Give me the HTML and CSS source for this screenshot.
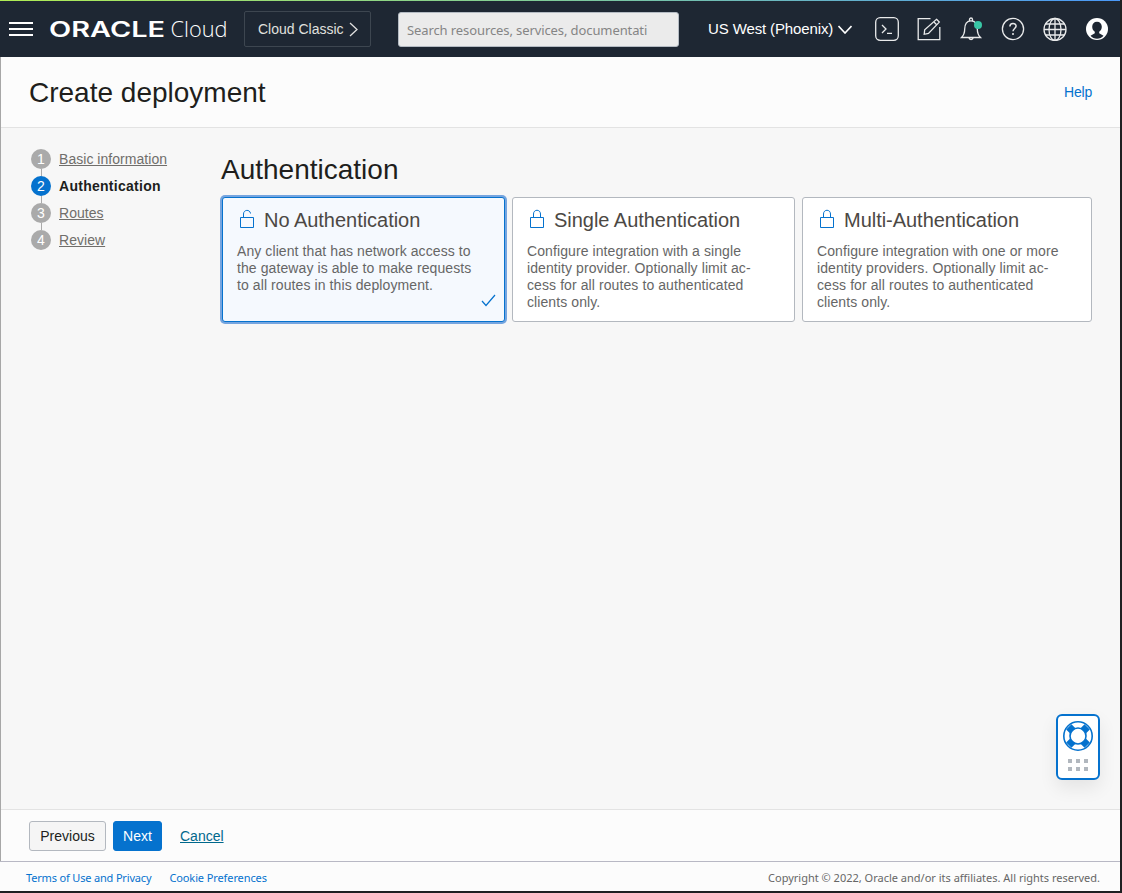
FILE: index.html
```
<!DOCTYPE html>
<html lang="en">
<head>
<meta charset="utf-8">
<title>Create deployment</title>
<link rel="stylesheet" href="styles.css">
</head>
<body>
<div class="window">
  <header class="topbar">
    <button class="menu" aria-label="Menu"><span></span><span></span><span></span></button>
    <svg class="logo" width="178" height="26" viewBox="0 0 178 26">
      <text class="brand" x="-1" y="19" textLength="116" lengthAdjust="spacingAndGlyphs">ORACLE</text>
      <text class="product" x="120.500" y="19" textLength="57" lengthAdjust="spacingAndGlyphs">Cloud</text>
    </svg>
    <a class="classic"><span>Cloud Classic</span>
      <svg width="9" height="15" viewBox="0 0 9 15"><path d="M1 1l7 6.500-7 6.500"/></svg>
    </a>
    <div class="search">Search resources, services, documentati</div>
    <div class="region"><span>US West (Phoenix)</span>
      <svg width="14" height="9" viewBox="0 0 14 9"><path d="M.5 1l6.500 7 6.500-7"/></svg>
    </div>
    <nav class="tools">
      <svg viewBox="0 0 24 24"><rect x=".7" y=".7" width="22.600" height="22.600" rx="4.500"/><path d="M7 8l4 4-4 4M12 16.300h5"/></svg>
      <svg viewBox="0 0 24 24"><path d="M13.500 1.600H1.200v21h21.600V10"/><path d="M19.500 2.300l2.800 2.800L11.500 16.500l-4.300.8.500-4.500z"/><path d="M17 5l2.700 2.700"/></svg>
      <svg viewBox="0 0 24 24"><path d="M2.500 20.500c2-2 3.200-5 3.200-8.500 0-5 2-8.200 6.300-8.200s6.300 3.200 6.300 8.200c0 3.500 1.200 6.500 3.200 8.500zM10.500 3.800V2.500a1.500 1.500 0 0 1 3 0v1.300M9.800 20.700a2.300 2.300 0 0 0 4.500 0"/><circle class="alert" cx="19" cy="8" r="4"/></svg>
      <svg viewBox="0 0 24 24"><circle cx="12" cy="12" r="10.600"/><path class="question" d="M8.900 9.500c0-4 6.200-4 6.200-.4 0 2.400-3.100 2.400-3.100 5.200M12 16v2"/></svg>
      <svg viewBox="0 0 24 24"><circle cx="12" cy="12.500" r="11"/><ellipse cx="12" cy="12.500" rx="6" ry="11"/><path d="M12 1.500v22M1 12.500h22M2.500 7h19M2.500 18h19"/></svg>
      <svg class="avatar" viewBox="0 0 24 24"><circle class="face" cx="12" cy="12" r="11"/><path class="person" d="M12 4.800c-3 0-4.800 2-4.800 5 0 2.200 1 4 2.600 5v1.500L5.500 18.800c3 4 10 4 13 0l-4.300-2.500v-1.500c1.600-1 2.600-2.800 2.600-5 0-3-1.800-5-4.800-5z"/></svg>
    </nav>
  </header>
  <div class="page">
    <div class="heading"><h1>Create deployment</h1><a class="help">Help</a></div>
    <main class="content">
      <ol class="steps">
        <li><b>1</b><a>Basic information</a></li>
        <li class="current"><b>2</b><a>Authentication</a></li>
        <li><b>3</b><a>Routes</a></li>
        <li><b>4</b><a>Review</a></li>
      </ol>
      <section class="panel">
        <h2>Authentication</h2>
        <div class="cards">
          <article class="card selected">
            <h3><svg width="16" height="20" viewBox="0 0 16 20"><path d="M1.500 8.500h13v10h-13z"/><path class="shackle" d="M4.500 8.500V5c0-4.500 6.500-5 7-.5"/></svg><span>No Authentication</span></h3>
            <p>Any client that has network access to<br>the gateway is able to make requests<br>to all routes in this deployment.</p>
            <svg class="check" width="15" height="13" viewBox="0 0 15 13"><path d="M1 7l4 4.500L14 1"/></svg>
          </article>
          <article class="card">
            <h3><svg width="16" height="20" viewBox="0 0 16 20"><path d="M1.500 8.500h13v10h-13z"/><path class="shackle" d="M4.500 8.500V5c0-5 7-5 7 0v3.500"/></svg><span>Single Authentication</span></h3>
            <p>Configure integration with a single<br>identity provider. Optionally limit ac-<br>cess for all routes to authenticated<br>clients only.</p>
          </article>
          <article class="card">
            <h3><svg width="16" height="20" viewBox="0 0 16 20"><path d="M1.500 8.500h13v10h-13z"/><path class="shackle" d="M4.500 8.500V5c0-5 7-5 7 0v3.500"/></svg><span>Multi-Authentication</span></h3>
            <p>Configure integration with one or more<br>identity providers. Optionally limit ac-<br>cess for all routes to authenticated<br>clients only.</p>
          </article>
        </div>
      </section>
    </main>
    <div class="actions">
      <button class="btn">Previous</button>
      <button class="btn primary">Next</button>
      <a class="cancel">Cancel</a>
    </div>
  </div>
  <footer class="footer">
    <a class="terms">Terms of Use and Privacy</a><a class="cookies">Cookie Preferences</a>
    <span class="copyright">Copyright © 2022, Oracle and/or its affiliates. All rights reserved.</span>
  </footer>
  <aside class="support">
    <svg width="30" height="30" viewBox="0 0 30 30"><path class="bands" d="M5.800 5.800l4 4M24.200 5.800l-4 4M5.800 24.200l4-4M24.200 24.200l-4-4"/><circle cx="15" cy="15" r="14.200"/><circle cx="15" cy="15" r="8"/></svg>
    <div class="grip"><i></i><i></i><i></i><i></i><i></i><i></i></div>
  </aside>
</div>
</body>
</html>
```
FILE: styles.css
```
* { box-sizing: border-box; }
body { margin: 0; background: #1f2022; font-family: "Liberation Sans", Arial, sans-serif; font-size: 14px; }
h1, h2, h3, p, ol { margin: 0; padding: 0; font-weight: 400; }
button { font: inherit; padding: 0; }
svg { display: block; flex: none; fill: none; }
.window { position: relative; width: 1120px; height: 891px; display: flex; flex-direction: column; }
.topbar { height: 57px; flex: none; display: flex; align-items: flex-start; background: linear-gradient(90deg, #b0ec54, #7fcb9b 50%, #4a98f8) 0 0 / 100% 1px no-repeat #1e2733; color: #fff; white-space: nowrap; }
.menu { width: 24px; height: 14px; margin: 22px 0 0 9px; border: 0; background: none; display: flex; flex-direction: column; justify-content: space-between; }
.menu span { height: 2px; background: #fff; }
.logo { margin: 18px 0 0 17px; overflow: visible; }
.logo text { fill: #fff; }
.brand { font: 600 21px Inter, sans-serif; }
.product { font: 300 22px "Open Sans", sans-serif; }
.classic { margin: 11px 0 0 16px; width: 127px; height: 36px; border: 1px solid #3d4650; border-radius: 2px; display: flex; align-items: center; padding-left: 13px; gap: 5px; color: #e0e0df; }
.classic svg, .region svg { stroke: currentColor; stroke-width: 1.3; }
.search { margin: 12px 0 0 27px; width: 281px; height: 35px; background: #ebebeb; border: 1px solid #b4bbc3; border-radius: 3px; padding: 0 8px; font: 13px/35px "Noto Sans", sans-serif; letter-spacing: -.1px; color: #858585; }
.region { margin: 18px 0 0 29px; height: 22px; width: 167px; display: flex; align-items: center; gap: 5px; font-size: 15px; letter-spacing: -.12px; }
.region span { line-height: 22px; height: 22px; }
.region svg { stroke-width: 1.6; margin-top: 1px; }
.tools { display: flex; gap: 18px; margin-top: 17px; }
.tools svg { width: 24px; height: 24px; stroke: #e9eaeb; stroke-width: 1.3; }
.tools .alert { fill: #39c6a5; stroke: none; }
.tools .question { stroke-width: 1.5; }
.tools .avatar { stroke: none; }
.face { fill: #fff; }
.person { fill: #1e2733; }
.page { flex: 1; border-left: 1px solid #a7a7a7; display: flex; flex-direction: column; background: #f7f7f7; }
.heading { height: 71px; flex: none; display: flex; align-items: center; justify-content: space-between; padding: 0 28px; background: #fcfcfc; border-bottom: 1px solid #e3e3e3; }
h1 { font-size: 28px; color: #201e1c; padding-top: 2px; }
.help { color: #0572ce; letter-spacing: -.2px; }
.content { flex: 1; display: flex; padding: 17px 28px 0 30px; }
.steps { width: 190px; list-style: none; }
.steps li { height: 27px; display: flex; align-items: center; color: #706e6b; }
.steps b { position: relative; width: 20px; height: 20px; border-radius: 50%; background: #aaa; color: #fff; font-weight: 400; line-height: 20px; text-align: center; margin-right: 8px; }
.steps li:not(:last-child) b::after { content: ""; position: absolute; left: 10px; top: 20px; width: 1px; height: 7px; background: #aaa; }
.steps a { text-decoration: underline; letter-spacing: .04px; }
.steps .current { color: #201e1c; font-weight: 700; }
.steps .current b { background: #0572ce; }
.steps .current a { text-decoration: none; letter-spacing: .27px; }
.panel { flex: 1; padding-top: 8px; }
h2 { font-size: 28px; line-height: 34px; height: 44px; color: #201e1c; }
.cards { display: grid; grid-template-columns: 285px 283px 290px; column-gap: 6px; width: 871px; }
.cards .card:last-child { margin-left: 1px; width: 290px; }
.card { position: relative; height: 125px; background: #fff; border: 1px solid #b3b8bf; border-radius: 3px; padding: 10px 14px; color: #666; white-space: nowrap; }
.card.selected { background: #f5f9fe; border-color: #0572ce; box-shadow: 0 0 0 2px #76a5df; width: 283px; margin-left: 1px; }
.card h3 { display: flex; height: 24px; align-items: center; font-size: 20px; letter-spacing: -.03px; color: #4c4844; margin-left: 2px; gap: 9px; }
.card h3 svg { stroke: #0572ce; stroke-width: 1; margin-top: -2px; }
.card p { line-height: 17px; margin-top: 11px; letter-spacing: .09px; }
.check { position: absolute; right: 8px; bottom: 14px; stroke: #0572ce; stroke-width: 1.2; }
.actions { height: 52px; flex: none; display: flex; align-items: center; padding-left: 28px; background: #fcfcfc; border-top: 1px solid #e3e3e3; }
.btn { width: 77px; height: 30px; border: 1px solid #b3b8bf; border-radius: 3px; background: #f5f5f5; color: #201e1c; }
.btn.primary { width: 49px; margin-left: 7px; background: #0572ce; border-color: #0572ce; color: #fff; }
.cancel { margin-left: 18px; color: #00688c; text-decoration: underline; }
.footer { height: 30px; flex: none; display: flex; align-items: center; border-top: 1px solid #b8b8c4; background: #fcfcfc; padding: 2px 20px 0 26px; font: 11px "Noto Sans", sans-serif; color: #666; white-space: nowrap; }
.footer a { color: #0572ce; margin-right: 18px; letter-spacing: -.17px; }
.footer .cookies { letter-spacing: -.1px; }
.copyright { margin-left: auto; }
.support { position: absolute; left: 1056px; top: 714px; width: 44px; height: 66px; border: 2px solid #0572ce; border-radius: 6px; background: #fff; box-shadow: 0 8px 18px rgba(0,0,0,.08); padding: 5px; }
.support svg { stroke: #0572ce; stroke-width: 1.6; }
.support .bands { stroke-width: 7.5; }
.grip { display: grid; grid-template-columns: repeat(3, 4px); gap: 4px; margin: 8px 0 0 5px; }
.grip i { height: 4px; background: #b1b7be; }
```
